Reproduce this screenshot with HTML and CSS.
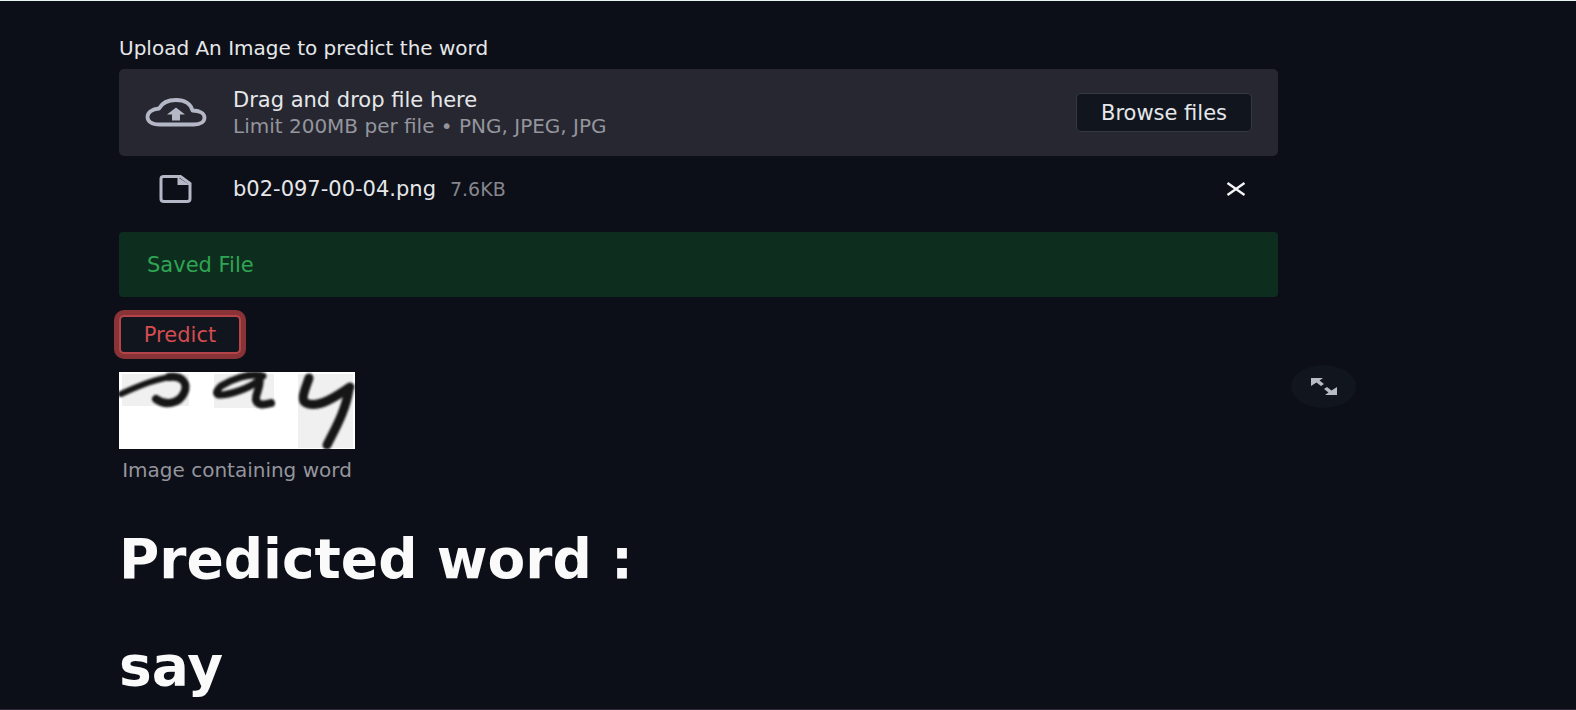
FILE: index.html
```html
<!DOCTYPE html>
<html lang="en">
<head>
<meta charset="utf-8">
<meta name="viewport" content="width=device-width, initial-scale=1">
<title>Word prediction</title>
<link rel="stylesheet" href="styles.css">
</head>
<body>
<main class="page">
  <section class="uploader">
    <label class="uploader-label" for="browse">Upload An Image to predict the word</label>
    <div class="dropzone">
      <svg class="cloud-icon" viewBox="0 0 62 29" aria-hidden="true"><path d="M15 26.500C6 26.500 2.500 23 2.500 19C2.500 14.500 7 11 14 10.500C17 5 23 2 31 2C40 2 46 6 47.500 12.500C55 12.500 59.500 15.500 59.500 19.500C59.500 23.500 56 26.500 49 26.500z" fill="none" stroke="currentColor" stroke-width="3.800" stroke-linejoin="round"/><path d="M31 9.500l9 7h-5v6h-8v-6H22z" fill="currentColor"/></svg>
      <div class="drop-text">
        <span class="drop-title">Drag and drop file here</span>
        <span class="drop-hint">Limit 200MB per file • PNG, JPEG, JPG</span>
      </div>
      <button class="button browse" id="browse" type="button">Browse files</button>
    </div>
    <div class="file-row">
      <svg class="file-icon" viewBox="0 0 33 28" aria-hidden="true"><path d="M4 1.500H21.500L31 8.500V24q0 2.500-3 2.500H5q-3 0-3-2.500V4q0-2.500 2.500-2.500z" fill="none" stroke="currentColor" stroke-width="3"/><path d="M18.500 2v8H31z" fill="currentColor"/></svg>
      <span class="file-name">b02-097-00-04.png</span>
      <span class="file-size">7.6KB</span>
      <button class="remove" type="button" aria-label="Remove file"><svg class="remove-icon" viewBox="0 0 20 14" aria-hidden="true"><path d="M1.500 1l17 12m0-12l-17 12" fill="none" stroke="currentColor" stroke-width="2.400"/></svg></button>
    </div>
  </section>
  <div class="alert" role="status">Saved File</div>
  <button class="button predict" type="button">Predict</button>
  <figure class="result">
    <svg class="sample" viewBox="0 0 236 77" role="img" aria-label="Handwritten word: say">
      <defs><filter id="soft" x="-10%" y="-20%" width="120%" height="140%"><feGaussianBlur stdDeviation="0.9"/></filter></defs>
      <rect width="236" height="77" fill="#fff"/>
      <path d="M3 2h67v32H3zM95 2h60v34H95zM179 2h55v74h-55z" fill="#f0f0f0"/>
      <g fill="none" stroke="#191919" stroke-linecap="round" stroke-linejoin="round" filter="url(#soft)">
        <path d="M2 22C19 14 36 7 52 5" stroke-width="6"/>
        <path d="M50 5C65 3 69 13 65 21C60 32 46 34 37 27" stroke-width="8"/>
        <path d="M144 4C130 0 112 8 102 14C97 19 96 22 100 23C112 23 130 16 139 9" stroke-width="7"/>
        <path d="M140 6C143 13 136 22 137 28C139 34 145 33 152 31" stroke-width="8"/>
        <path d="M190 6C186 18 181 28 187 31C199 37 218 24 231 15" stroke-width="9"/>
        <path d="M230 17C227 38 216 57 208 73" stroke-width="9"/>
      </g>
    </svg>
    <figcaption class="caption">Image containing word</figcaption>
    <button class="expand" type="button" aria-label="View fullscreen"><svg class="expand-icon" viewBox="0 0 26 17" aria-hidden="true"><path d="M0 0h12L8.500 2.500l4.500 3.500-3 2-4.500-3.500L0 8zM26 17H14l3.500-2.500L13 11l3-2 4.500 3.500L26 9z" fill="currentColor"/></svg></button>
  </figure>
  <h1 class="heading">Predicted word :</h1>
  <h1 class="heading">say</h1>
</main>
</body>
</html>
```
FILE: styles.css
```css
* {
  box-sizing: border-box;
}

body {
  margin: 0;
  background: #0c0f17;
  color: #e6e7ea;
  font-family: "DejaVu Sans", sans-serif;
  font-size: 21px;
  line-height: 26px;
}

.page {
  min-height: 100vh;
  padding: 34px 298px 0 119px;
  border-top: 1px solid #e6f3ee;
  border-bottom: 1px solid #2c2836;
}

.uploader-label {
  display: block;
  margin-bottom: 8px;
  font-size: 20px;
}

.dropzone {
  display: flex;
  align-items: center;
  min-height: 87px;
  padding: 0 26px;
  border-radius: 5px;
  background: #262730;
}

.cloud-icon {
  flex: none;
  width: 62px;
  height: 29px;
  margin-right: 26px;
  color: #b4b7c6;
}

.drop-text {
  display: flex;
  flex: 1;
  flex-direction: column;
}

.drop-hint {
  color: #94959d;
  font-size: 20px;
}

.button {
  border: 1px solid #353841;
  border-radius: 5px;
  background: #10151e;
  color: inherit;
  font: inherit;
}

.browse {
  height: 39px;
  padding: 0 20px;
  min-width: 176px;
}

.file-row {
  display: flex;
  align-items: center;
  height: 66px;
  padding: 0 32px 0 40px;
}

.file-icon {
  width: 33px;
  height: 28px;
  margin-right: 41px;
  color: #b4b7c6;
}

.file-size {
  flex: 1;
  margin-left: 14px;
  color: #85868e;
  font-size: 19px;
}

.remove {
  display: flex;
  padding: 0;
  border: 0;
  background: none;
  color: #f4f4f6;
}

.remove-icon {
  width: 20px;
  height: 14px;
}

.alert {
  margin-top: 10px;
  padding: 20px 28px 19px;
  border-radius: 4px;
  background: #0d2e1e;
  color: #2fa553;
}

.predict {
  display: block;
  min-width: 122px;
  height: 39px;
  margin: 18px 0;
  border: 2px solid #b5454a;
  box-shadow: 0 0 0 5px #893337;
  color: #d64c50;
}

.result {
  position: relative;
  margin: 0 0 3px;
}

.sample {
  display: block;
  width: 236px;
  height: 77px;
}

.caption {
  width: 236px;
  margin-top: 8px;
  color: #94959d;
  font-size: 20px;
  text-align: center;
  white-space: nowrap;
}

.expand {
  position: absolute;
  top: -7px;
  right: -78px;
  display: flex;
  align-items: center;
  justify-content: center;
  width: 65px;
  height: 43px;
  border: 0;
  border-radius: 50%;
  background: #10151e;
  color: #b9bbc2;
}

.expand-icon {
  width: 26px;
  height: 17px;
}

.heading {
  margin: 0;
  padding-top: 40px;
  color: #fafafa;
  font-size: 55px;
  font-weight: 700;
  line-height: 67px;
}
```
